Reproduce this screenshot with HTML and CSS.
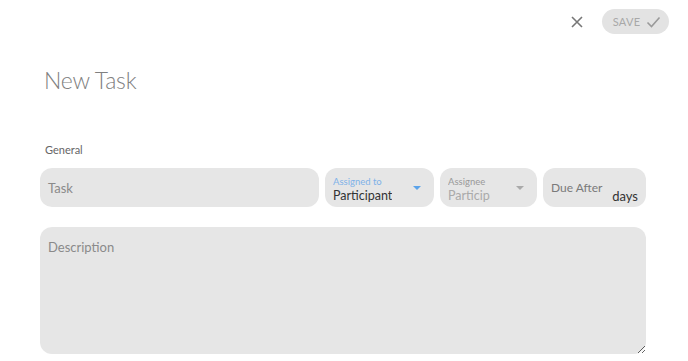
FILE: index.html
```html
<!DOCTYPE html>
<html>
<head>
<meta charset="utf-8">
<link rel="stylesheet" href="styles.css">
</head>
<body>
<div class="page">
  <header class="toolbar">
    <button class="close" aria-label="Close">
      <svg width="14" height="14" viewBox="0 0 14 14"><path d="M2 2 L12 12 M12 2 L2 12" stroke="#777" stroke-width="1.6" fill="none"/></svg>
    </button>
    <button class="save">SAVE
      <svg width="15" height="12" viewBox="0 0 15 12"><path d="M1.5 6.5 L5.5 10.5 L13.5 1.5" stroke="#9a9a9a" stroke-width="1.6" fill="none"/></svg>
    </button>
  </header>
  <h1 class="title">New Task</h1>
  <div class="section">General</div>
  <div class="row">
    <div class="field task"><span class="ph">Task</span></div>
    <div class="field select active">
      <div class="stack">
        <span class="label blue">Assigned to</span>
        <span class="value">Participant</span>
      </div>
      <span class="arrow blue-arrow"></span>
    </div>
    <div class="field select disabled">
      <div class="stack">
        <span class="label">Assignee</span>
        <span class="value muted">Participant</span>
      </div>
      <span class="arrow"></span>
    </div>
    <div class="field due">
      <span class="ph small">Due After</span>
      <span class="days">days</span>
    </div>
  </div>
  <textarea class="desc" placeholder="Description"></textarea>
</div>
</body>
</html>
```
FILE: styles.css
```css
* { box-sizing: border-box; }
html, body { margin: 0; padding: 0; background: #fff; }
body { font-family: Lato, "Open Sans", sans-serif; color: #333; }
.page { width: 688px; height: 361px; padding: 0 42px 0 40px; overflow: hidden; }
.toolbar { display: flex; justify-content: flex-end; align-items: center; gap: 18px; height: 43px; margin-right: -23px; }
.close { border: 0; background: none; padding: 0; width: 14px; height: 14px; display: flex; cursor: pointer; }
.save { border: 0; background: #e3e3e3; color: #a8a8a8; border-radius: 13px; height: 25px; width: 67px; font-family: inherit; font-size: 11px; letter-spacing: 0.3px; display: flex; align-items: center; justify-content: center; gap: 6px; padding: 0 0 0 3px; }
.title { margin: 23px 0 0 4px; font-weight: 300; font-size: 23px; color: #808080; line-height: 28px; letter-spacing: -0.2px; }
.section { margin: 49px 0 0 5px; font-size: 11px; color: #666; line-height: 14px; }
.row { display: flex; gap: 6px; margin-top: 11px; }
.field { background: #e6e6e6; border-radius: 12px; height: 39px; display: flex; align-items: center; padding: 0 8px; position: relative; }
.task { width: 279px; }
.select { width: 109px; justify-content: space-between; }
.disabled { width: 97px; }
.due { width: 103px; }
.ph { font-size: 13px; color: #8a8a8a; }
.ph.small { font-size: 12px; color: #7a7a7a; }
.stack { display: flex; flex-direction: column; overflow: hidden; padding-top: 4px; }
.label { font-size: 9.5px; color: #999; line-height: 12px; margin-top: 1px; }
.label.blue { color: #7fb2e8; }
.value { font-size: 12.5px; color: #333; line-height: 16px; white-space: nowrap; }
.value.muted { color: #aaa; width: 42px; overflow: hidden; }
.arrow { width: 0; height: 0; border-left: 4px solid transparent; border-right: 4px solid transparent; border-top: 4px solid #aaa; margin-right: 5px; }
.blue-arrow { border-top-color: #5ba3ea; }
.days { position: absolute; right: 8px; bottom: 3px; font-size: 13px; color: #333; }
.desc { display: block; width: 606px; height: 127px; margin-top: 20px; border: 0; background: #e6e6e6; border-radius: 12px; padding: 12px 8px; font-family: inherit; font-size: 13px; color: #333; outline: none; resize: both; }
.desc::placeholder { color: #8a8a8a; }
```
